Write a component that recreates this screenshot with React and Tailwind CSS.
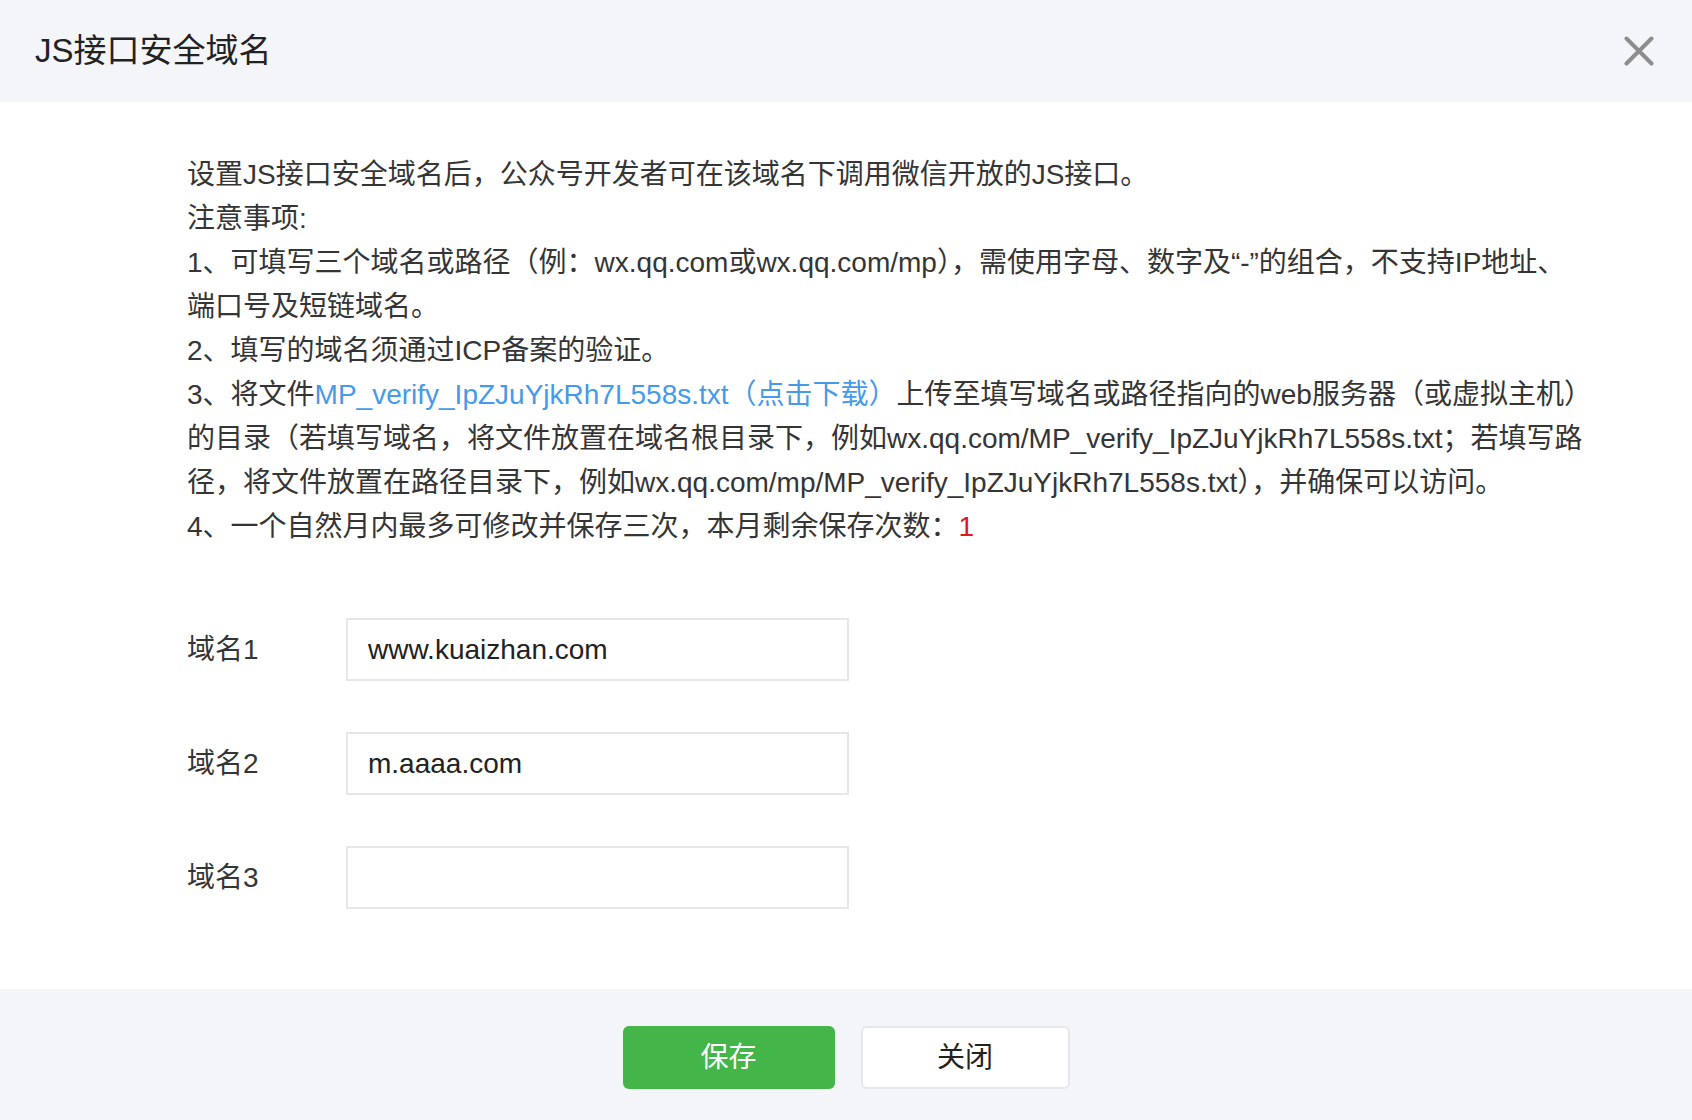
import { useState } from "react";

const font = { fontFamily: '"Liberation Sans", "Noto Sans CJK SC", sans-serif' };

function CloseIcon() {
  return (
    <svg width="30" height="30" viewBox="0 0 30 30" className="text-[#8d8d8d]">
      <path d="M2.5 2.5 L27.5 27.5 M27.5 2.5 L2.5 27.5" stroke="currentColor" strokeWidth="4" strokeLinecap="round" />
    </svg>
  );
}

function DomainRow({ label, value }) {
  const [val, setVal] = useState(value);
  return (
    <div className="flex items-center">
      <label className="w-[159px] text-[28px] text-[#353535]">{label}</label>
      <input
        value={val}
        onChange={(e) => setVal(e.target.value)}
        className="w-[503px] h-[63px] border-2 border-[#e7e7eb] bg-white px-[20px] text-[28px] text-[#222] outline-none"
        style={font}
      />
    </div>
  );
}

export default function App() {
  return (
    <div className="w-full h-[1120px] flex flex-col bg-white text-[#353535]" style={font}>
      <header className="h-[102px] shrink-0 bg-[#f4f5f9] flex items-center justify-between pl-[35px] pr-[38px]">
        <h2 className="text-[33px] text-[#222]">JS接口安全域名</h2>
        <button className="w-[30px] h-[30px] flex items-center justify-center">
          <CloseIcon />
        </button>
      </header>

      <main className="flex-1 pt-[51px] pl-[187px]">
        <div className="text-[28px] leading-[44px] whitespace-nowrap">
          <p>设置JS接口安全域名后，公众号开发者可在该域名下调用微信开放的JS接口。</p>
          <p>注意事项:</p>
          <p>1、可填写三个域名或路径（例：wx.qq.com或wx.qq.com/mp），需使用字母、数字及“-”的组合，不支持IP地址、</p>
          <p>端口号及短链域名。</p>
          <p>2、填写的域名须通过ICP备案的验证。</p>
          <p>
            3、将文件<a href="#" className="text-[#459ae9]">MP_verify_IpZJuYjkRh7L558s.txt（点击下载）</a>上传至填写域名或路径指向的web服务器（或虚拟主机）
          </p>
          <p>的目录（若填写域名，将文件放置在域名根目录下，例如wx.qq.com/MP_verify_IpZJuYjkRh7L558s.txt；若填写路</p>
          <p>径，将文件放置在路径目录下，例如wx.qq.com/mp/MP_verify_IpZJuYjkRh7L558s.txt），并确保可以访问。</p>
          <p>
            4、一个自然月内最多可修改并保存三次，本月剩余保存次数：<span className="text-[#e2161d]">1</span>
          </p>
        </div>

        <div className="mt-[69px] flex flex-col gap-[51px]">
          <DomainRow label="域名1" value="www.kuaizhan.com" />
          <DomainRow label="域名2" value="m.aaaa.com" />
          <DomainRow label="域名3" value="" />
        </div>
      </main>

      <footer className="h-[131px] shrink-0 bg-[#f4f5f9] flex items-center justify-center gap-[26px] pt-[6px]">
        <button className="w-[212px] h-[63px] rounded-[6px] bg-[#44b549] text-white text-[28px]">保存</button>
        <button className="w-[209px] h-[63px] rounded-[6px] bg-white border-2 border-[#e4e8eb] text-[#222] text-[28px]">关闭</button>
      </footer>
    </div>
  );
}
